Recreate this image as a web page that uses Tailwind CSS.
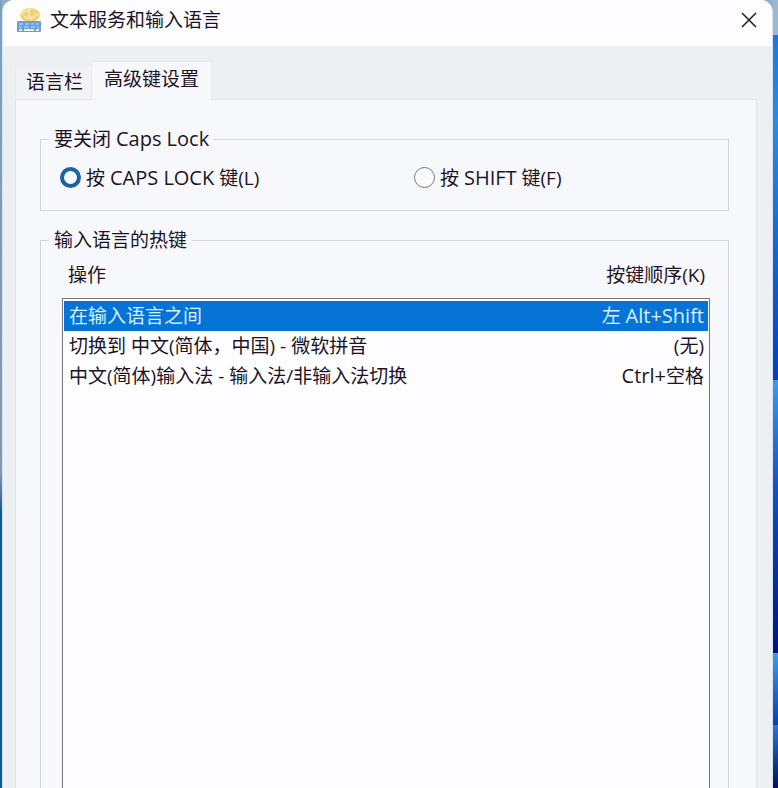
<!DOCTYPE html>
<html lang="zh-CN">

<head>
  <meta charset="UTF-8">
  <meta name="viewport" content="width=device-width, initial-scale=1.0">
  <title>文本服务和输入语言</title>
  <script src="https://cdn.jsdelivr.net/npm/@tailwindcss/browser@4"></script>
</head>

<body class="flex h-screen overflow-hidden bg-[#8fb0cd] font-['Open_Sans','Noto_Sans_CJK_SC',sans-serif] text-[19px] leading-6 text-[#1c1426]">

  <!-- Desktop, left edge -->
  <div class="w-[2px] shrink-0 bg-linear-to-b from-[#7f9fbd] via-[#8d93a8] via-60% to-[#14559a] to-65%"></div>

  <!-- Dialog -->
  <main class="flex min-w-0 flex-1 flex-col self-start overflow-hidden rounded-t-xl border-x border-[#cfe6fa] bg-[#eeeff2]">

    <!-- Title Bar -->
    <header class="flex h-[46px] items-center bg-[#fdfdff] pr-[13px] pb-[6px] pl-[13px]">
      <svg class="h-7 w-[26px]" viewBox="0 0 26 28" fill="none">
        <ellipse cx="14" cy="9" rx="10" ry="7" fill="#f3d277" />
        <path d="M5 8q5-5 10-5M8 11q7 3 14-3M14 2q-3 6 1 12" stroke="#f9e6a6" stroke-width="2" />
        <rect x="1" y="15" width="24" height="11" rx="1" fill="#6c9fd9" />
        <path d="M3 18h4M9 18h4M15 18h3M20 18h3M3 21h3M8 21h5M15 21h4M21 21h2" stroke="#c3dcf6" stroke-width="1" />
        <path d="M3 24h3M8 24h10M20 24h3" stroke="#e6f2fd" stroke-width="2" />
      </svg>
      <h1 class="ml-2 flex-1">文本服务和输入语言</h1>
      <button type="button" aria-label="关闭" class="flex h-8 w-5 items-center justify-center">
        <svg class="h-4 w-4" viewBox="0 0 16 16" fill="none" stroke="#24182c" stroke-width="1.5">
          <path d="M1 1l14 14M15 1L1 15" />
        </svg>
      </button>
    </header>

    <div class="pt-[15px] pr-[15px] pl-3">

      <!-- Tabs -->
      <div role="tablist" class="flex h-[38px] items-end">
        <button type="button" role="tab" aria-selected="false" class="h-[34px] border-t border-l border-[#e9eaee] bg-[#f2f3f6] pr-2 pb-[2px] pl-[10px]">语言栏</button>
        <button type="button" role="tab" aria-selected="true" class="relative -mb-px h-[39px] border-x border-t border-[#e9eaee] bg-[#f7f8fc] px-3 pb-1">高级键设置</button>
      </div>

      <!-- Tab Panel -->
      <section role="tabpanel" class="border border-[#e2e4e9] bg-[#f7f8fc] pt-[27px] pr-[27px] pl-6">

        <!-- Caps Lock -->
        <fieldset class="border border-[#d3d6dc]">
          <legend class="ml-2 px-[5px]">要关闭 <span class="text-xl leading-6">Caps Lock</span></legend>
          <div class="grid h-[59px] grid-cols-[6fr_5fr] items-center px-[19px] pb-[6px]">
            <label class="flex items-center gap-[5px]">
              <input type="radio" name="caps" checked class="h-[21px] w-[21px] appearance-none rounded-full border border-[#77747c] bg-[#fafafc] checked:border-4 checked:border-[#1b62a6]">
              <span>按 <span class="text-xl leading-6">CAPS LOCK</span> 键(L)</span>
            </label>
            <label class="flex items-center gap-[5px]">
              <input type="radio" name="caps" class="h-[21px] w-[21px] appearance-none rounded-full border border-[#77747c] bg-[#fafafc] checked:border-4 checked:border-[#1b62a6]">
              <span>按 <span class="text-xl leading-6">SHIFT</span> 键(F)</span>
            </label>
          </div>
        </fieldset>

        <!-- Hot Keys -->
        <fieldset class="mt-[17px] border border-[#d3d6dc] pr-[18px] pl-[21px]">
          <legend class="-ml-[13px] px-[5px]">输入语言的热键</legend>
          <table class="block">
            <thead class="block">
              <tr class="flex h-[46px] justify-between pt-[11px] pr-[5px] pl-[6px]">
                <th class="font-normal">操作</th>
                <th class="font-normal">按键顺序(K)</th>
              </tr>
            </thead>
            <tbody class="block min-h-[560px] border border-[#737383] bg-[#fdfdff] px-px pt-[2px]">
              <tr class="flex h-[30px] items-center justify-between bg-[#0673d6] pr-1 pl-[5px] text-[#d8f0ff]">
                <td>在输入语言之间</td>
                <td>左 <span class="text-xl leading-6">Alt+Shift</span></td>
              </tr>
              <tr class="flex h-[30px] items-center justify-between pr-1 pl-[5px]">
                <td>切换到 中文(简体，中国) - 微软拼音</td>
                <td>(无)</td>
              </tr>
              <tr class="flex h-[30px] items-center justify-between pr-1 pl-[5px]">
                <td>中文(简体)输入法 - 输入法/非输入法切换</td>
                <td><span class="text-xl leading-6">Ctrl+</span>空格</td>
              </tr>
            </tbody>
          </table>
        </fieldset>

      </section>
    </div>
  </main>

  <!-- Desktop, right edge -->
  <div class="flex w-[5px] shrink-0 flex-col">
    <div class="h-[35px] bg-[#9fb6cc]"></div>
    <div class="h-[85px] bg-linear-to-b from-[#1c78d8] to-[#2a8be6]"></div>
    <div class="h-[260px] bg-linear-to-b from-[#2f8be0] to-[#0a3cc0]"></div>
    <div class="h-[273px] bg-linear-to-b from-[#3d9be8] via-[#1450c4] via-40% to-[#04107c]"></div>
    <div class="h-[72px] bg-linear-to-b from-[#3f9ce6] to-[#0c3fae]"></div>
    <div class="flex-1 bg-linear-to-b from-[#2a78d4] to-[#06105c]"></div>
  </div>

</body>

</html>
